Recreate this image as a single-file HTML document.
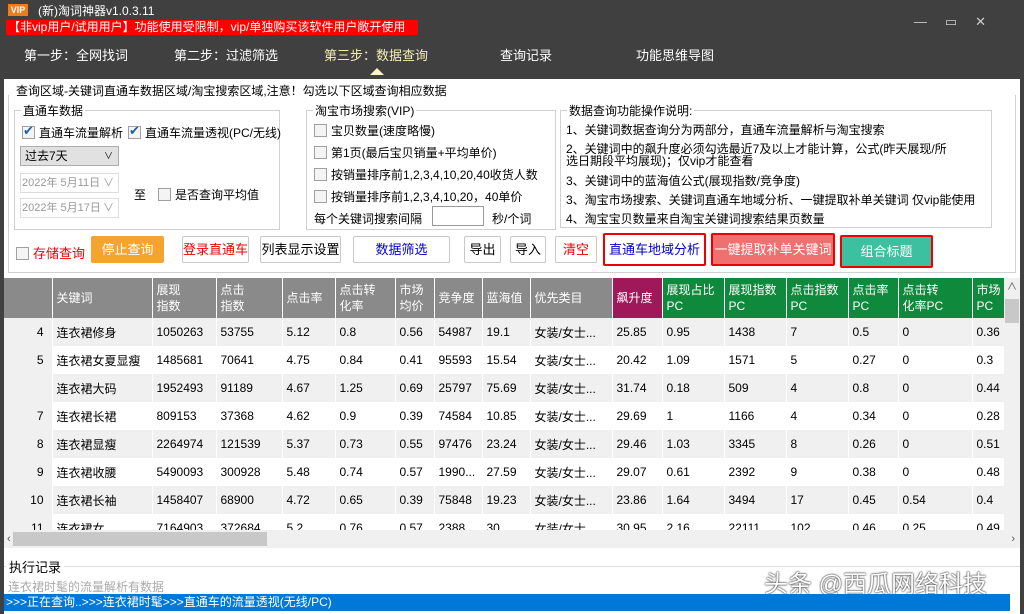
<!DOCTYPE html><html><head><meta charset="utf-8"><style>
*{margin:0;padding:0;box-sizing:border-box}
body{width:1024px;height:614px;background:#404040;position:relative;overflow:hidden;font-family:"Liberation Sans","Noto Sans CJK SC",sans-serif;font-size:12px;color:#000}
.a{position:absolute;white-space:nowrap}
.nav{color:#fff;font-size:13px;top:45px}
.grp{position:absolute;border:1px solid #d0d0d0}
.lg{position:absolute;background:#fff;padding:0 2px;top:-9px;left:6px;font-size:12px}
.cb{display:inline-block;width:13px;height:13px;border:1px solid #a0a0a0;background:#f4f4f4;vertical-align:-2px;margin-right:4px;position:relative}
.cb.on::after{content:"✔";position:absolute;left:0;top:-4px;color:#1a5fa8;font-size:13px}
.btn{position:absolute;top:236px;height:27px;border:1px solid #c8c8c8;background:#fff;border-radius:2px;text-align:center;line-height:25px;font-size:13px}
table{border-collapse:collapse;position:absolute;left:4px;top:278px;table-layout:fixed}
td{height:28px;border-right:1px solid #fff;padding-left:4px;font-size:12px;overflow:hidden;white-space:nowrap}
th{height:40px;background:#8a8a8a;color:#fff;font-weight:normal;text-align:left;padding-left:4px;font-size:12px;line-height:16px;border-right:1px solid #fff;vertical-align:middle;overflow:hidden}
th.g{background:#0f8a3c}th.m{background:#a0185a}
tr.e td{background:#f0f0f0}tr.o td{background:#fff}
td.n{text-align:right;padding-right:8px;background:#f0f0f0!important}
</style></head><body>
<div class="a" style="left:8px;top:4px;width:20px;height:12px;background:#f07b1a;color:#fff;font-size:9px;font-weight:bold;line-height:12px;text-align:center">VIP</div>
<div class="a" style="left:38px;top:2px;color:#fff;font-size:12px">(新)淘词神器v1.0.3.11</div>
<div class="a" style="left:6px;top:20px;width:412px;background:#f00;color:#fff;font-size:12px;line-height:15px;padding:0 2px">【非vip用户/试用用户】功能使用受限制，vip/单独购买该软件用户敞开使用</div>
<div class="a" style="right:20px;top:14px;color:#ccc;font-size:13px;letter-spacing:18px">—▭✕</div>
<div class="a nav" style="left:24px">第一步：全网找词</div>
<div class="a nav" style="left:174px">第二步：过滤筛选</div>
<div class="a nav" style="left:324px;color:#f5eeb0">第三步：数据查询</div>
<div class="a" style="left:370px;top:68px;width:0;height:0;border:7px solid transparent;border-bottom-color:#fff5c0;border-top:0"></div>
<div class="a nav" style="left:500px">查询记录</div>
<div class="a nav" style="left:636px">功能思维导图</div>
<div class="a" style="left:4px;top:79px;width:1016px;height:199px;background:#fff"></div>
<div class="a" style="left:16px;top:82px;font-size:12px">查询区域-关键词直通车数据区域/淘宝搜索区域,注意！勾选以下区域查询相应数据</div>
<div class="grp" style="left:8px;top:95px;width:1008px;height:178px;border-top:0"></div>
<div class="grp" style="left:14px;top:110px;width:266px;height:120px"><span class="lg">直通车数据</span></div>
<div class="a" style="left:22px;top:124px"><span class="cb on"></span>直通车流量解析</div>
<div class="a" style="left:128px;top:124px"><span class="cb on"></span>直通车流量透视(PC/无线)</div>
<div class="a" style="left:20px;top:146px;width:99px;height:20px;background:#e1e1e1;border:1px solid #adadad;line-height:18px;padding-left:4px">过去7天<span style="float:right;margin-right:5px;font-size:9px">∨</span></div>
<div class="a" style="left:20px;top:173px;width:99px;height:20px;border:1px solid #ddd;color:#999;line-height:18px;padding-left:1px;font-size:11px">2022年 5月11日 <span style="float:right;margin-right:4px">∨</span></div>
<div class="a" style="left:20px;top:198px;width:99px;height:20px;border:1px solid #ddd;color:#999;line-height:18px;padding-left:1px;font-size:11px">2022年 5月17日 <span style="float:right;margin-right:4px">∨</span></div>
<div class="a" style="left:134px;top:186px">至</div>
<div class="a" style="left:158px;top:186px"><span class="cb"></span>是否查询平均值</div>
<div class="grp" style="left:306px;top:110px;width:250px;height:120px"><span class="lg">淘宝市场搜索(VIP)</span></div>
<div class="a" style="left:314px;top:122px"><span class="cb"></span>宝贝数量(速度略慢)</div>
<div class="a" style="left:314px;top:144px"><span class="cb"></span>第1页(最后宝贝销量+平均单价)</div>
<div class="a" style="left:314px;top:166px"><span class="cb"></span>按销量排序前1,2,3,4,10,20,40收货人数</div>
<div class="a" style="left:314px;top:188px"><span class="cb"></span>按销量排序前1,2,3,4,10,20，40单价</div>
<div class="a" style="left:314px;top:210px">每个关键词搜索间隔</div>
<div class="a" style="left:432px;top:206px;width:52px;height:20px;border:1px solid #999"></div>
<div class="a" style="left:492px;top:210px">秒/个词</div>
<div class="grp" style="left:560px;top:110px;width:432px;height:118px"><span class="lg">数据查询功能操作说明:</span></div>
<div class="a" style="left:566px;top:123px;line-height:14px">1、关键词数据查询分为两部分，直通车流量解析与淘宝搜索</div>
<div class="a" style="left:566px;top:143px;line-height:12px">2、关键词中的飙升度必须勾选最近7及以上才能计算，公式(昨天展现/所<br>选日期段平均展现)；仅vip才能查看</div>
<div class="a" style="left:566px;top:172px">3、关键词中的蓝海值公式(展现指数/竞争度)</div>
<div class="a" style="left:566px;top:191px">3、淘宝市场搜索、关键词直通车地域分析、一键提取补单关键词 仅vip能使用</div>
<div class="a" style="left:566px;top:210px">4、淘宝宝贝数量来自淘宝关键词搜索结果页数量</div>
<div class="a" style="left:16px;top:243px;font-size:13px;color:#e00"><span class="cb"></span>存储查询</div>
<div class="btn" style="left:91px;width:73px;background:#f5a42f;border-color:#f5a42f;color:#fff">停止查询</div>
<div class="btn" style="left:182px;width:67px;color:#e00">登录直通车</div>
<div class="btn" style="left:260px;width:81px">列表显示设置</div>
<div class="btn" style="left:353px;width:97px;color:#00c">数据筛选</div>
<div class="btn" style="left:464px;width:37px">导出</div>
<div class="btn" style="left:510px;width:36px">导入</div>
<div class="btn" style="left:555px;width:42px;color:#e00">清空</div>
<div class="btn" style="left:603px;top:233px;width:103px;height:33px;border:2px solid #e00;line-height:29px;color:#00c">直通车地域分析</div>
<div class="btn" style="left:711px;top:233px;width:124px;height:33px;border:2px solid #e00;background:#f07070;color:#fff;line-height:29px">一键提取补单关键词</div>
<div class="btn" style="left:840px;top:235px;width:93px;height:33px;border:2px solid #e00;background:#3cc0a0;color:#fff;line-height:29px">组合标题</div>
<div class="a" style="left:4px;top:278px;width:1016px;height:270px;background:#fff"></div>
<table>
<colgroup><col style="width:48px"><col style="width:100px"><col style="width:64px"><col style="width:66px"><col style="width:53px"><col style="width:60px"><col style="width:39px"><col style="width:48px"><col style="width:48px"><col style="width:82px"><col style="width:50px"><col style="width:62px"><col style="width:62px"><col style="width:62px"><col style="width:50px"><col style="width:74px"><col style="width:32px"></colgroup>
<tr><th></th><th>关键词</th><th>展现<br>指数</th><th>点击<br>指数</th><th>点击率</th><th>点击转<br>化率</th><th>市场<br>均价</th><th>竞争度</th><th>蓝海值</th><th>优先类目</th><th class="m">飙升度</th><th class="g">展现占比<br>PC</th><th class="g">展现指数<br>PC</th><th class="g">点击指数<br>PC</th><th class="g">点击率<br>PC</th><th class="g">点击转<br>化率PC</th><th class="g">市场<br>PC</th></tr>
<tr class="e"><td class="n">4</td><td>连衣裙修身</td><td>1050263</td><td>53755</td><td>5.12</td><td>0.8</td><td>0.56</td><td>54987</td><td>19.1</td><td>女装/女士...</td><td>25.85</td><td>0.95</td><td>1438</td><td>7</td><td>0.5</td><td>0</td><td>0.36</td></tr>
<tr class="o"><td class="n">5</td><td>连衣裙女夏显瘦</td><td>1485681</td><td>70641</td><td>4.75</td><td>0.84</td><td>0.41</td><td>95593</td><td>15.54</td><td>女装/女士...</td><td>20.42</td><td>1.09</td><td>1571</td><td>5</td><td>0.27</td><td>0</td><td>0.3</td></tr>
<tr class="e"><td class="n"></td><td>连衣裙大码</td><td>1952493</td><td>91189</td><td>4.67</td><td>1.25</td><td>0.69</td><td>25797</td><td>75.69</td><td>女装/女士...</td><td>31.74</td><td>0.18</td><td>509</td><td>4</td><td>0.8</td><td>0</td><td>0.44</td></tr>
<tr class="o"><td class="n">7</td><td>连衣裙长裙</td><td>809153</td><td>37368</td><td>4.62</td><td>0.9</td><td>0.39</td><td>74584</td><td>10.85</td><td>女装/女士...</td><td>29.69</td><td>1</td><td>1166</td><td>4</td><td>0.34</td><td>0</td><td>0.28</td></tr>
<tr class="e"><td class="n">8</td><td>连衣裙显瘦</td><td>2264974</td><td>121539</td><td>5.37</td><td>0.73</td><td>0.55</td><td>97476</td><td>23.24</td><td>女装/女士...</td><td>29.46</td><td>1.03</td><td>3345</td><td>8</td><td>0.26</td><td>0</td><td>0.51</td></tr>
<tr class="o"><td class="n">9</td><td>连衣裙收腰</td><td>5490093</td><td>300928</td><td>5.48</td><td>0.74</td><td>0.57</td><td>1990...</td><td>27.59</td><td>女装/女士...</td><td>29.07</td><td>0.61</td><td>2392</td><td>9</td><td>0.38</td><td>0</td><td>0.48</td></tr>
<tr class="e"><td class="n">10</td><td>连衣裙长袖</td><td>1458407</td><td>68900</td><td>4.72</td><td>0.65</td><td>0.39</td><td>75848</td><td>19.23</td><td>女装/女士...</td><td>23.86</td><td>1.64</td><td>3494</td><td>17</td><td>0.45</td><td>0.54</td><td>0.4</td></tr>
<tr class="o"><td class="n">11</td><td>连衣裙女</td><td>7164903</td><td>372684</td><td>5.2</td><td>0.76</td><td>0.57</td><td>2388</td><td>30</td><td>女装/女士...</td><td>30.95</td><td>2.16</td><td>22111</td><td>102</td><td>0.46</td><td>0.25</td><td>0.49</td></tr>
</table>
<div class="a" style="left:1004px;top:278px;width:16px;height:252px;background:#f0f0f0;font-size:10px;text-align:center;color:#555">∧<div style="margin:6px 1px;height:24px;background:#c8c8c8"></div></div>
<div class="a" style="left:4px;top:530px;width:1016px;height:18px;background:#f0f0f0;color:#555;font-size:11px;line-height:18px;padding-left:3px">‹<div style="position:absolute;left:9px;top:2px;width:254px;height:14px;background:#c8c8c8"></div><span style="position:absolute;right:5px">›</span></div>
<div class="a" style="left:4px;top:548px;width:1016px;height:66px;background:#fff"></div>
<div class="a" style="left:4px;top:566px;width:1016px;border-top:1px solid #ddd"></div>
<div class="a" style="left:6px;top:557px;background:#fff;padding:0 3px;font-size:13px">执行记录</div>
<div class="a" style="left:8px;top:578px;color:#aaa;font-size:12px">连衣裙时髦的流量解析有数据</div>
<div class="a" style="left:764px;top:564px;color:#fff;font-size:24px;text-shadow:0 0 2px #333,0 0 1px #000">头条 @西瓜网络科技</div>
<div class="a" style="left:4px;top:594px;width:1006px;height:17px;background:#0078d7;color:#fff;font-size:12px;line-height:17px;padding-left:2px">&gt;&gt;&gt;正在查询..&gt;&gt;&gt;连衣裙时髦&gt;&gt;&gt;直通车的流量透视(无线/PC)</div>
</body></html>
